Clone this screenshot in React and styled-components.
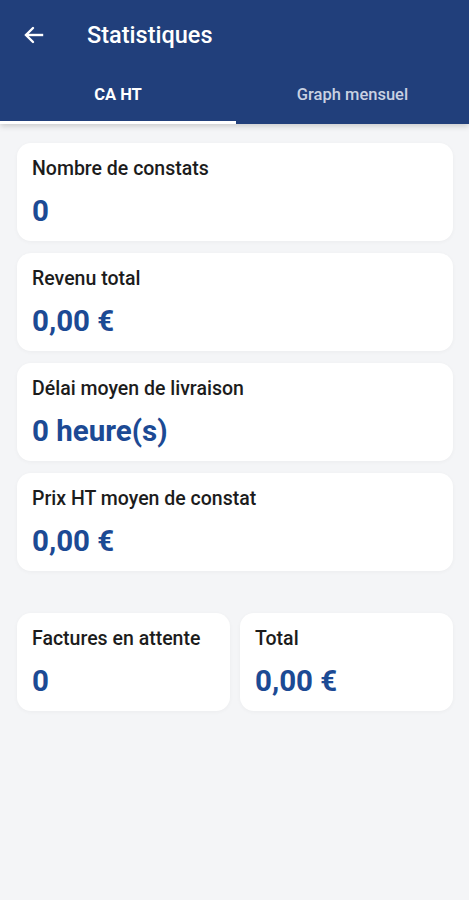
import React, { useState } from "react";
import styled, { createGlobalStyle } from "styled-components";

const GlobalStyle = createGlobalStyle`
  html, body {
    margin: 0;
    padding: 0;
    background: #f4f5f7;
    font-family: Roboto, "Liberation Sans", sans-serif;
  }
`;

const Page = styled.div`
  min-height: 900px;
  background: #f4f5f7;
`;

const Header = styled.header`
  background: #213f7b;
  box-shadow: 0 2px 6px rgba(0, 0, 0, 0.18);
`;

const Toolbar = styled.div`
  height: 70px;
  display: flex;
  align-items: center;
  padding-left: 22px;
  gap: 41px;
`;

const BackButton = styled.button`
  background: none;
  border: none;
  padding: 0;
  display: flex;
  color: #fff;
  cursor: pointer;
`;

const Title = styled.h1`
  margin: 0;
  color: #fff;
  font-size: 23.5px;
  font-weight: 500;
`;

const Tabs = styled.div`
  display: grid;
  grid-template-columns: 236px 1fr;
  height: 54px;
`;

const Tab = styled.button`
  background: none;
  border: none;
  border-bottom: 3px solid ${(p) => (p.active ? "#ffffff" : "transparent")};
  color: ${(p) => (p.active ? "#ffffff" : "#c9d1e2")};
  font-family: Roboto, "Liberation Sans", sans-serif;
  font-size: 16.5px;
  font-weight: ${(p) => (p.active ? 700 : 500)};
  padding: 0 0 2px;
  cursor: pointer;
`;

const Content = styled.main`
  padding: 19px 16px 0 17px;
  display: flex;
  flex-direction: column;
  gap: 12px;
`;

const Card = styled.div`
  background: #fff;
  border-radius: 14px;
  padding: 14px 15px 16px;
  height: 98px;
  box-sizing: border-box;
  box-shadow: 0 1px 4px rgba(0, 0, 0, 0.04);
`;

const CardLabel = styled.div`
  font-size: 19.5px;
  font-weight: 500;
  color: #1c1c1c;
  line-height: 24px;
`;

const CardValue = styled.div`
  margin-top: 14px;
  font-size: 29.5px;
  font-weight: 700;
  color: #1c4a94;
  line-height: 32px;
`;

const Row = styled.div`
  margin-top: 30px;
  display: grid;
  grid-template-columns: 1fr 1fr;
  gap: 10px;
`;

const stats = [
  { label: "Nombre de constats", value: "0" },
  { label: "Revenu total", value: "0,00 €" },
  { label: "Délai moyen de livraison", value: "0 heure(s)" },
  { label: "Prix HT moyen de constat", value: "0,00 €" },
];

const App = () => {
  const [tab, setTab] = useState(0);
  return (
    <Page>
      <GlobalStyle />
      <Header>
        <Toolbar>
          <BackButton aria-label="Retour">
            <svg width="24" height="24" viewBox="0 0 24 24" fill="none" stroke="currentColor" strokeWidth="2.4" strokeLinecap="square">
              <path d="M20 12H5" />
              <path d="M11 5l-7 7 7 7" strokeLinecap="round" strokeLinejoin="miter" />
            </svg>
          </BackButton>
          <Title>Statistiques</Title>
        </Toolbar>
        <Tabs>
          <Tab active={tab === 0} onClick={() => setTab(0)}>CA HT</Tab>
          <Tab active={tab === 1} onClick={() => setTab(1)}>Graph mensuel</Tab>
        </Tabs>
      </Header>
      <Content>
        {stats.map((s) => (
          <Card key={s.label}>
            <CardLabel>{s.label}</CardLabel>
            <CardValue>{s.value}</CardValue>
          </Card>
        ))}
        <Row>
          <Card>
            <CardLabel>Factures en attente</CardLabel>
            <CardValue>0</CardValue>
          </Card>
          <Card>
            <CardLabel>Total</CardLabel>
            <CardValue>0,00 €</CardValue>
          </Card>
        </Row>
      </Content>
    </Page>
  );
};

export default App;
